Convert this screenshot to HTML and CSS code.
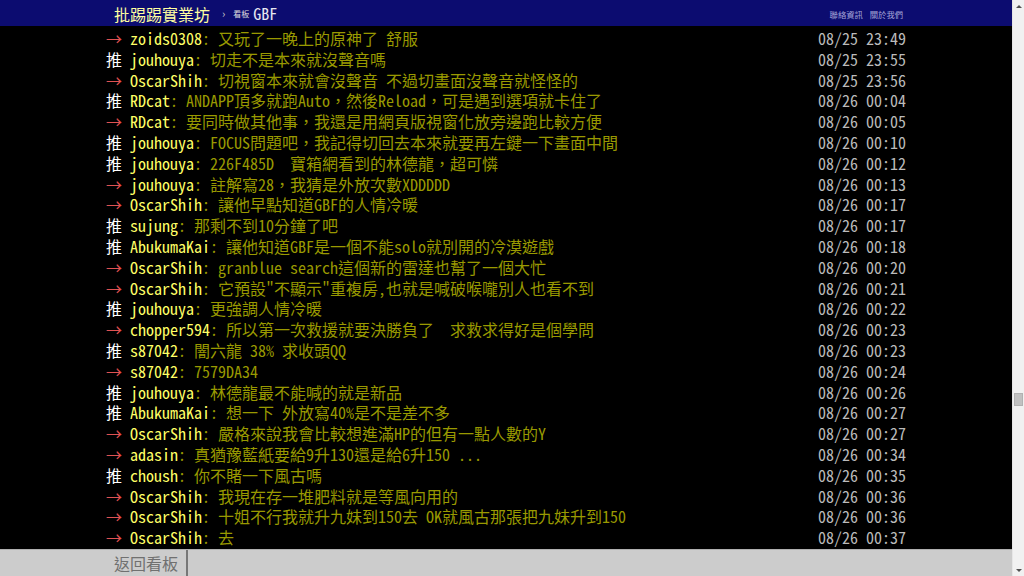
FILE: index.html
```html
<!DOCTYPE html>
<html lang="zh-Hant">
    <head>
        <meta charset="UTF-8" />
        <meta name="viewport" content="width=device-width, initial-scale=1.0" />
        <title>[問題] GBF - 批踢踢實業坊</title>
        <link rel="stylesheet" href="styles.css">
    </head>
    <body>
        <div class="page">
            <!-- Top bar -->
            <div class="topbar">
                <div class="topbar-inner">
                    <a class="logo" href="#">批踢踢實業坊</a>
                    <span class="crumb-sep">›</span>
                    <span class="board-label">看板</span>
                    <a class="board" href="#">GBF</a>
                    <div class="topbar-links">
                        <a href="#">聯絡資訊</a>
                        <a href="#">關於我們</a>
                    </div>
                </div>
            </div>

            <!-- Push list -->
            <div class="main">
                <div class="bbs-screen">
                    <div class="push"><span class="push-tag arrow">→</span><span class="push-userid">zoids0308</span><span class="push-content">: 又玩了一晚上的原神了 舒服</span><span class="push-ipdatetime">08/25 23:49</span></div>
                    <div class="push"><span class="push-tag">推</span><span class="push-userid">jouhouya</span><span class="push-content">: 切走不是本來就沒聲音嗎</span><span class="push-ipdatetime">08/25 23:55</span></div>
                    <div class="push"><span class="push-tag arrow">→</span><span class="push-userid">OscarShih</span><span class="push-content">: 切視窗本來就會沒聲音 不過切畫面沒聲音就怪怪的</span><span class="push-ipdatetime">08/25 23:56</span></div>
                    <div class="push"><span class="push-tag">推</span><span class="push-userid">RDcat</span><span class="push-content">: ANDAPP頂多就跑Auto，然後Reload，可是遇到選項就卡住了</span><span class="push-ipdatetime">08/26 00:04</span></div>
                    <div class="push"><span class="push-tag arrow">→</span><span class="push-userid">RDcat</span><span class="push-content">: 要同時做其他事，我還是用網頁版視窗化放旁邊跑比較方便</span><span class="push-ipdatetime">08/26 00:05</span></div>
                    <div class="push"><span class="push-tag">推</span><span class="push-userid">jouhouya</span><span class="push-content">: FOCUS問題吧，我記得切回去本來就要再左鍵一下畫面中間</span><span class="push-ipdatetime">08/26 00:10</span></div>
                    <div class="push"><span class="push-tag">推</span><span class="push-userid">jouhouya</span><span class="push-content">: 226F485D  寶箱網看到的林德龍，超可憐</span><span class="push-ipdatetime">08/26 00:12</span></div>
                    <div class="push"><span class="push-tag arrow">→</span><span class="push-userid">jouhouya</span><span class="push-content">: 註解寫28，我猜是外放次數XDDDDD</span><span class="push-ipdatetime">08/26 00:13</span></div>
                    <div class="push"><span class="push-tag arrow">→</span><span class="push-userid">OscarShih</span><span class="push-content">: 讓他早點知道GBF的人情冷暖</span><span class="push-ipdatetime">08/26 00:17</span></div>
                    <div class="push"><span class="push-tag">推</span><span class="push-userid">sujung</span><span class="push-content">: 那剩不到10分鐘了吧</span><span class="push-ipdatetime">08/26 00:17</span></div>
                    <div class="push"><span class="push-tag">推</span><span class="push-userid">AbukumaKai</span><span class="push-content">: 讓他知道GBF是一個不能solo就別開的冷漠遊戲</span><span class="push-ipdatetime">08/26 00:18</span></div>
                    <div class="push"><span class="push-tag arrow">→</span><span class="push-userid">OscarShih</span><span class="push-content">: granblue search這個新的雷達也幫了一個大忙</span><span class="push-ipdatetime">08/26 00:20</span></div>
                    <div class="push"><span class="push-tag arrow">→</span><span class="push-userid">OscarShih</span><span class="push-content">: 它預設"不顯示"重複房,也就是喊破喉嚨別人也看不到</span><span class="push-ipdatetime">08/26 00:21</span></div>
                    <div class="push"><span class="push-tag">推</span><span class="push-userid">jouhouya</span><span class="push-content">: 更強調人情冷暖</span><span class="push-ipdatetime">08/26 00:22</span></div>
                    <div class="push"><span class="push-tag arrow">→</span><span class="push-userid">chopper594</span><span class="push-content">: 所以第一次救援就要決勝負了  求救求得好是個學問</span><span class="push-ipdatetime">08/26 00:23</span></div>
                    <div class="push"><span class="push-tag">推</span><span class="push-userid">s87042</span><span class="push-content">: 闇六龍 38% 求收頭QQ</span><span class="push-ipdatetime">08/26 00:23</span></div>
                    <div class="push"><span class="push-tag arrow">→</span><span class="push-userid">s87042</span><span class="push-content">: 7579DA34</span><span class="push-ipdatetime">08/26 00:24</span></div>
                    <div class="push"><span class="push-tag">推</span><span class="push-userid">jouhouya</span><span class="push-content">: 林德龍最不能喊的就是新品</span><span class="push-ipdatetime">08/26 00:26</span></div>
                    <div class="push"><span class="push-tag">推</span><span class="push-userid">AbukumaKai</span><span class="push-content">: 想一下 外放寫40%是不是差不多</span><span class="push-ipdatetime">08/26 00:27</span></div>
                    <div class="push"><span class="push-tag arrow">→</span><span class="push-userid">OscarShih</span><span class="push-content">: 嚴格來說我會比較想進滿HP的但有一點人數的Y</span><span class="push-ipdatetime">08/26 00:27</span></div>
                    <div class="push"><span class="push-tag arrow">→</span><span class="push-userid">adasin</span><span class="push-content">: 真猶豫藍紙要給9升130還是給6升150 ...</span><span class="push-ipdatetime">08/26 00:34</span></div>
                    <div class="push"><span class="push-tag">推</span><span class="push-userid">choush</span><span class="push-content">: 你不賭一下風古嗎</span><span class="push-ipdatetime">08/26 00:35</span></div>
                    <div class="push"><span class="push-tag arrow">→</span><span class="push-userid">OscarShih</span><span class="push-content">: 我現在存一堆肥料就是等風向用的</span><span class="push-ipdatetime">08/26 00:36</span></div>
                    <div class="push"><span class="push-tag arrow">→</span><span class="push-userid">OscarShih</span><span class="push-content">: 十姐不行我就升九妹到150去 OK就風古那張把九妹升到150</span><span class="push-ipdatetime">08/26 00:36</span></div>
                    <div class="push"><span class="push-tag arrow">→</span><span class="push-userid">OscarShih</span><span class="push-content">: 去</span><span class="push-ipdatetime">08/26 00:37</span></div>
                </div>
            </div>

            <!-- Bottom navigation -->
            <div class="bottombar">
                <div class="bottombar-inner">
                    <a class="back-link" href="#">返回看板</a>
                </div>
            </div>
        </div>

        <!-- Window scrollbar -->
        <div class="scrollbar">
            <span class="scroll-arrow up"></span>
            <div class="scroll-track">
                <div class="scroll-thumb"></div>
            </div>
            <span class="scroll-arrow down"></span>
        </div>
    </body>
</html>
```

FILE: styles.css
```css
* {
    margin: 0;
    padding: 0;
    box-sizing: border-box;
}

html,
body {
    height: 100%;
    overflow: hidden;
}

body {
    display: flex;
    background-color: #000;
    font-family: "Noto Sans Mono CJK TC", "Liberation Mono", "Noto Sans CJK TC", monospace;
    font-size: 16px;
    color: #bbb;
}

a {
    text-decoration: none;
    color: inherit;
}

.page {
    flex: 1;
    display: flex;
    flex-direction: column;
    min-width: 0;
}

/* Top bar */
.topbar {
    height: 26px;
    background-color: #0c0c70;
    flex-shrink: 0;
}

.topbar-inner {
    width: 800px;
    height: 100%;
    margin: 0 auto;
    padding: 0 3px 0 8px;
    display: flex;
    align-items: center;
}

.logo {
    color: #ffffa0;
    font-family: "Noto Sans CJK TC", sans-serif;
    font-size: 16px;
    line-height: 1;
    margin-top: 1px;
}

.crumb-sep {
    color: #ccc;
    font-size: 11px;
    margin-left: 12px;
    margin-right: 8px;
}

.board-label {
    color: #ddd;
    font-size: 8px;
    margin-right: 4px;
}

.board {
    color: #e6e6f0;
    font-size: 16px;
}

.topbar-links {
    margin-left: auto;
    display: flex;
    gap: 7px;
    font-size: 8.3px;
    margin-top: 2px;
}

.topbar-links a {
    color: #a4a4d8;
}

/* Push list */
.main {
    flex: 1;
    overflow: hidden;
    padding-top: 2px;
}

.bbs-screen {
    width: 800px;
    margin: 0 auto;
}

.push {
    display: flex;
    height: 20.8px;
    line-height: 20.8px;
    white-space: pre;
}

.push-tag {
    color: #fff;
    width: 24px;
    flex-shrink: 0;
}

.push-tag.arrow {
    color: #e05252;
}

.push-userid {
    color: #ff6;
}

.push-content {
    color: #990;
}

.push-ipdatetime {
    margin-left: auto;
    color: #bbb;
}

/* Bottom bar */
.bottombar {
    height: 27px;
    background-color: #ccc;
    border-top: 1px solid #b0b0b0;
    flex-shrink: 0;
}

.bottombar-inner {
    width: 800px;
    height: 100%;
    margin: 0 auto;
    display: flex;
}

.back-link {
    display: flex;
    align-items: center;
    padding: 0 8px;
    border-right: 2px solid #777;
    color: #707070;
    font-family: "Noto Sans CJK TC", sans-serif;
    font-size: 16px;
}

/* Fake window scrollbar */
.scrollbar {
    width: 12px;
    flex-shrink: 0;
    background-color: #f1f1f1;
    border-left: 1px solid #e6e6e6;
    display: flex;
    flex-direction: column;
}

.scroll-arrow {
    height: 12px;
    display: flex;
    align-items: center;
    justify-content: center;
}

.scroll-arrow::before {
    content: "";
    border-left: 3px solid transparent;
    border-right: 3px solid transparent;
}

.scroll-arrow.up::before {
    border-bottom: 3px solid #505050;
}

.scroll-arrow.down::before {
    border-top: 3px solid #505050;
}

.scroll-track {
    flex: 1;
    position: relative;
}

.scroll-thumb {
    position: absolute;
    top: 381px;
    left: 1px;
    width: 9px;
    height: 13px;
    background-color: #c1c1c1;
    border: 1px solid #b2b2b2;
}
```
